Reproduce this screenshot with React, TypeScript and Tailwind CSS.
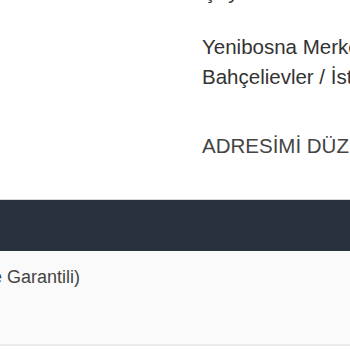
import React from 'react';

const App = () => {
  return (
    <div className="w-[350px] h-[350px] overflow-hidden bg-white font-['Liberation_Sans',Arial,sans-serif] text-[20.5px] text-[#333]">
      <div className="pl-[202px] pb-[38px] whitespace-nowrap">
        <p className="-mt-[23px] leading-[30px]">Çayırlı Ev Adresi</p>
        <div className="mt-[25px] leading-[30px]">
          <p>Yenibosna Merkez Mah. 29 Ekim Cad. No: 12</p>
          <p>Bahçelievler / İstanbul</p>
        </div>
        <p className="mt-[39px] leading-[30px] text-[#444]">ADRESİMİ DÜZENLE</p>
      </div>
      <div className="h-[52px] border-t border-[#d5d9dd] bg-[#29323c]" />
      <div className="h-[95px] bg-[#fafafa] pt-[13px] border-b-2 border-[#ebebeb]">
        <div className="w-[80px] flex justify-end whitespace-nowrap text-[18px] leading-[26px] text-[#444]">
          <span>(Orijinal Ürün ve Garantili)</span>
        </div>
      </div>
    </div>
  );
};

export default App;
